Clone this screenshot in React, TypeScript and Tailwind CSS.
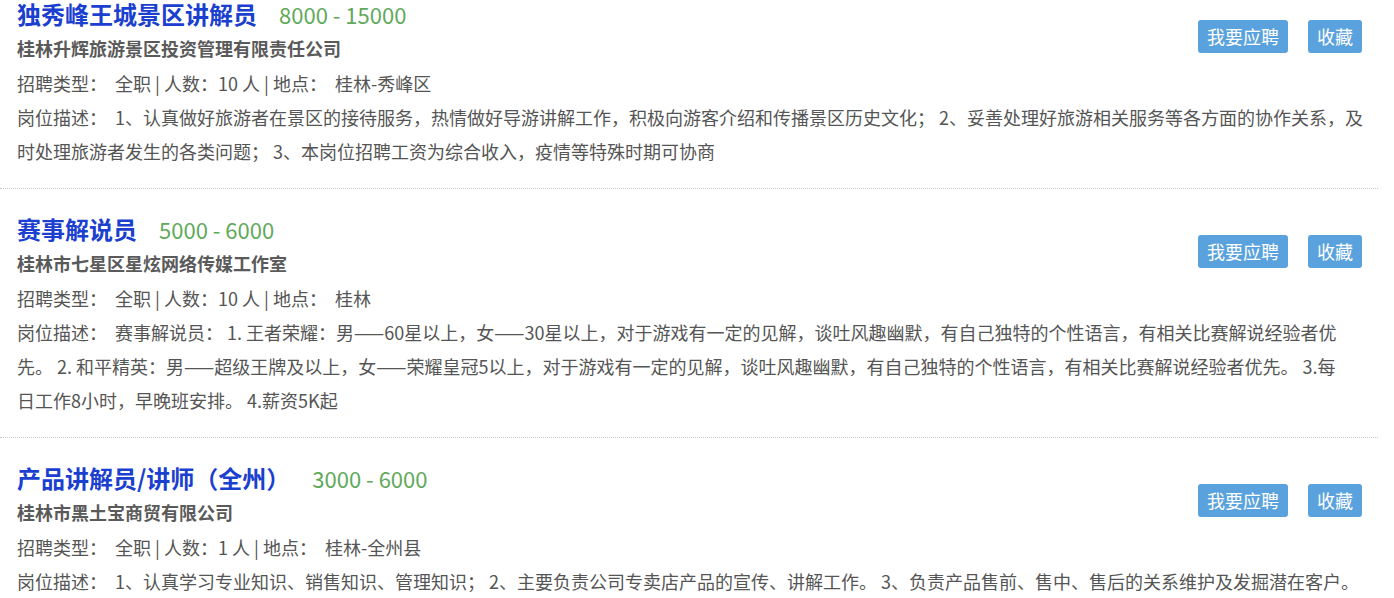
import React from 'react'

interface Job {
  title: string
  salary: string
  company: string
  type: string
  count: number
  place: string
  desc: string[]
}

// description lines are split where the original page wraps them
const jobs: Job[] = [
  {
    title: '独秀峰王城景区讲解员',
    salary: '8000 - 15000',
    company: '桂林升辉旅游景区投资管理有限责任公司',
    type: '全职',
    count: 10,
    place: '桂林-秀峰区',
    desc: [
      '岗位描述：\u00a0 1、认真做好旅游者在景区的接待服务，热情做好导游讲解工作，积极向游客介绍和传播景区历史文化； 2、妥善处理好旅游相关服务等各方面的协作关系，及',
      '时处理旅游者发生的各类问题； 3、本岗位招聘工资为综合收入，疫情等特殊时期可协商',
    ],
  },
  {
    title: '赛事解说员',
    salary: '5000 - 6000',
    company: '桂林市七星区星炫网络传媒工作室',
    type: '全职',
    count: 10,
    place: '桂林',
    desc: [
      '岗位描述：\u00a0 赛事解说员： 1. 王者荣耀：男——60星以上，女——30星以上，对于游戏有一定的见解，谈吐风趣幽默，有自己独特的个性语言，有相关比赛解说经验者优',
      '先。 2. 和平精英：男——超级王牌及以上，女——荣耀皇冠5以上，对于游戏有一定的见解，谈吐风趣幽默，有自己独特的个性语言，有相关比赛解说经验者优先。 3.每',
      '日工作8小时，早晚班安排。 4.薪资5K起',
    ],
  },
  {
    title: '产品讲解员/讲师（全州）',
    salary: '3000 - 6000',
    company: '桂林市黑土宝商贸有限公司',
    type: '全职',
    count: 1,
    place: '桂林-全州县',
    desc: [
      '岗位描述：\u00a0 1、认真学习专业知识、销售知识、管理知识； 2、主要负责公司专卖店产品的宣传、讲解工作。 3、负责产品售前、售中、售后的关系维护及发掘潜在客户。',
    ],
  },
]

function JobCard({ job }: { job: Job }) {
  return (
    <div className="border-b border-dotted border-[#c8c8c8] pt-6 pb-5 pl-[17px] pr-4">
      <div className="flex justify-between items-start">
        <div>
          <div className="flex items-center h-[32px]">
            <span className="text-[24px] font-bold text-[#1b3fcf] leading-[32px]">{job.title}</span>
            <span className="text-[22px] text-[#5fa95a] ml-[22px] leading-[32px]">{job.salary}</span>
          </div>
          <p className="text-[18px] font-bold text-[#5a5a5a] leading-[36px]">{job.company}</p>
        </div>
        <div className="flex gap-5 mt-[22px]">
          <button className="bg-[#5aa2dd] text-white text-[18px] h-[33px] px-[9px] rounded-[3px] leading-[33px]">
            我要应聘
          </button>
          <button className="bg-[#5aa2dd] text-white text-[18px] h-[33px] px-[9px] rounded-[3px] leading-[33px]">
            收藏
          </button>
        </div>
      </div>
      <p className="text-[18px] text-[#555] leading-[34px]">
        招聘类型：&nbsp; {job.type} | 人数：{job.count} 人 | 地点：&nbsp; {job.place}
      </p>
      {job.desc.map((line, i) => (
        <p key={i} className="text-[18px] text-[#555] leading-[34px] whitespace-nowrap">
          {line}
        </p>
      ))}
    </div>
  )
}

export default function App() {
  return (
    <div
      className="bg-white w-[1394px] h-[598px] overflow-hidden"
      style={{ fontFamily: '"Microsoft YaHei", "Noto Sans CJK SC", sans-serif' }}
    >
      <div className="w-[1378px] -mt-[26px]">
        {jobs.map((j) => (
          <JobCard key={j.title} job={j} />
        ))}
      </div>
    </div>
  )
}
